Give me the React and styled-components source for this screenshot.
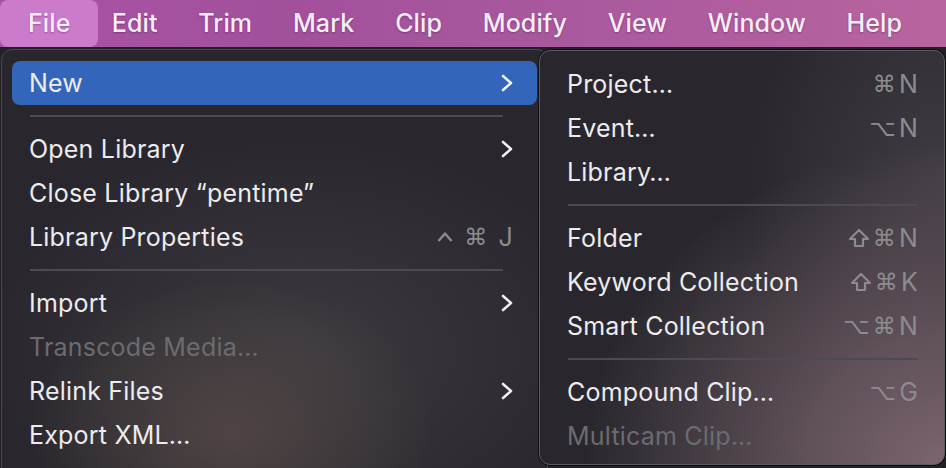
import styled, { createGlobalStyle } from "styled-components";

const GlobalStyle = createGlobalStyle`
  html, body {
    margin: 0;
    padding: 0;
    background: #222126;
    overflow: hidden;
  }
  body {
    font-family: "Inter", "Liberation Sans", "DejaVu Sans", sans-serif;
    -webkit-font-smoothing: antialiased;
  }
`;

const Screen = styled.div`
  width: 946px;
  height: 468px;
  display: flex;
  flex-direction: column;
  overflow: hidden;
  background: #222126;
`;

/* top menu bar */
const MenuBar = styled.div`
  height: 47px;
  flex: none;
  display: flex;
  align-items: stretch;
  background: linear-gradient(90deg, #a953a6 0%, #a2509c 30%, #ab5a9e 65%, #b8649e 100%);
  border-bottom: 1px solid #1d1b45;
`;

const BarItem = styled.div`
  display: flex;
  align-items: center;
  padding: 0 ${(p) => (p.active ? "28px" : "20.4px")};
  margin: 0 ${(p) => (p.active ? "-7px" : "0")} 0 0;
  border-radius: 8px;
  background: ${(p) => (p.active ? "rgba(228, 150, 228, 0.6)" : "transparent")};
  color: #f6eef6;
  font-size: 25px;
  font-weight: 500;
  letter-spacing: 0.1px;
  text-shadow: 0 1px 2px rgba(60, 0, 60, 0.35);
  padding-bottom: 2px;
`;

const MenuArea = styled.div`
  flex: 1;
  display: flex;
  align-items: flex-start;
  padding-top: 1px;
`;

/* drop-down panels */
const Panel = styled.div`
  box-sizing: border-box;
  display: flex;
  flex-direction: column;
  border: 1px solid ${(p) => (p.sub ? "#5b5a60" : "#48474c")};
  border-radius: 11px;
  padding: 11px 0 6px;
  margin-left: ${(p) => (p.sub ? "-9px" : "1px")};
  margin-top: ${(p) => (p.sub ? "1px" : "0")};
  width: ${(p) => (p.sub ? "406px" : "547px")};
  position: relative;
  z-index: ${(p) => (p.sub ? 2 : 1)};
  box-shadow: ${(p) => (p.sub ? "0 0 0 1px rgba(0,0,0,0.55)" : "none")};
  background: ${(p) =>
    p.sub
      ? `radial-gradient(ellipse 360px 320px at 100% 100%, rgba(128,104,114,0.95) 0%, rgba(112,93,103,0.75) 40%, rgba(60,55,62,0) 100%),
         radial-gradient(ellipse 200px 240px at 100% 30%, rgba(70,64,72,0.8) 0%, rgba(50,48,54,0) 100%),
         #29272d`
      : `radial-gradient(ellipse 200px 150px at 230px 380px, rgba(82,70,68,0.9) 0%, rgba(60,56,58,0) 100%),
         radial-gradient(ellipse 320px 220px at 300px 300px, rgba(62,60,66,0.9) 0%, rgba(45,43,49,0) 100%),
         #29272d`};
  min-height: ${(p) => (p.sub ? "auto" : "430px")};
`;

const Row = styled.div`
  height: 44px;
  margin: 0 10px;
  padding: 0 ${(p) => (p.sub ? "16px" : "24px")} 0 17px;
  display: flex;
  align-items: center;
  justify-content: space-between;
  border-radius: 8px;
  background: ${(p) => (p.selected ? "#3366ba" : "transparent")};
  color: ${(p) => (p.disabled ? "#6c6b70" : "#ecebee")};
  font-size: 25px;
  letter-spacing: 0.2px;
  white-space: nowrap;
`;

const Separator = styled.div`
  height: 2px;
  margin: 10px ${(p) => (p.sub ? "26px" : "44px")} 10px 28px;
  background: #4c4b51;
`;

const Shortcut = styled.span`
  display: flex;
  align-items: center;
  gap: ${(p) => (p.wide ? "11px" : "3px")};
  color: #8c8b90;
  font-size: 25px;
`;

const Mod = styled.span`
  font-family: "DejaVu Sans", sans-serif;
  font-size: 23px;
  display: flex;
  align-items: center;
`;

const Chevron = () => (
  <svg width="12" height="18" viewBox="0 0 12 18">
    <polyline
      points="2,2 10,9 2,16"
      fill="none"
      stroke="#f2f2f4"
      strokeWidth="2.6"
      strokeLinecap="round"
      strokeLinejoin="round"
    />
  </svg>
);

const ShiftIcon = () => (
  <svg width="22" height="20" viewBox="0 0 22 20">
    <path
      d="M11 2 L20 11 H15 V18 H7 V11 H2 Z"
      fill="none"
      stroke="#8c8b90"
      strokeWidth="2.2"
      strokeLinejoin="round"
    />
  </svg>
);

const ControlIcon = () => (
  <svg width="16" height="12" viewBox="0 0 16 12">
    <polyline
      points="1.5,10 8,2.5 14.5,10"
      fill="none"
      stroke="#8c8b90"
      strokeWidth="2.4"
      strokeLinejoin="round"
    />
  </svg>
);

const modGlyph = (m) => {
  if (m === "shift") return <ShiftIcon />;
  if (m === "ctrl") return <ControlIcon />;
  return m;
};

const barItems = ["File", "Edit", "Trim", "Mark", "Clip", "Modify", "View", "Window", "Help"];

const fileMenu = [
  { label: "New", arrow: true, selected: true },
  { sep: true },
  { label: "Open Library", arrow: true },
  { label: "Close Library \u201cpentime\u201d" },
  { label: "Library Properties", mods: ["ctrl", "\u2318"], key: "J", wide: true },
  { sep: true },
  { label: "Import", arrow: true },
  { label: "Transcode Media\u2026", disabled: true },
  { label: "Relink Files", arrow: true },
  { label: "Export XML\u2026" },
];

const newMenu = [
  { label: "Project\u2026", mods: ["\u2318"], key: "N" },
  { label: "Event\u2026", mods: ["\u2325"], key: "N" },
  { label: "Library\u2026" },
  { sep: true },
  { label: "Folder", mods: ["shift", "\u2318"], key: "N" },
  { label: "Keyword Collection", mods: ["shift", "\u2318"], key: "K" },
  { label: "Smart Collection", mods: ["\u2325", "\u2318"], key: "N" },
  { sep: true },
  { label: "Compound Clip\u2026", mods: ["\u2325"], key: "G" },
  { label: "Multicam Clip\u2026", disabled: true },
];

const MenuRows = ({ items, sub }) =>
  items.map((item, i) =>
    item.sep ? (
      <Separator key={i} sub={sub} />
    ) : (
      <Row key={i} sub={sub} selected={item.selected} disabled={item.disabled}>
        <span>{item.label}</span>
        {item.arrow && <Chevron />}
        {item.mods && (
          <Shortcut wide={item.wide}>
            {item.mods.map((m, j) => (
              <Mod key={j}>{modGlyph(m)}</Mod>
            ))}
            <span>{item.key}</span>
          </Shortcut>
        )}
      </Row>
    )
  );

export default function App() {
  return (
    <Screen>
      <GlobalStyle />
      <MenuBar>
        {barItems.map((name, i) => (
          <BarItem key={name} active={i === 0}>
            {name}
          </BarItem>
        ))}
      </MenuBar>
      <MenuArea>
        <Panel>
          <MenuRows items={fileMenu} />
        </Panel>
        <Panel sub>
          <MenuRows items={newMenu} sub />
        </Panel>
      </MenuArea>
    </Screen>
  );
}
